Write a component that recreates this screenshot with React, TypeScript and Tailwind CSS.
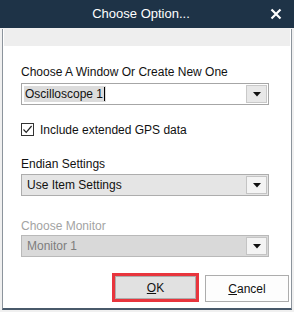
import React from "react";

function Caret() {
  return (
    <svg width="8" height="5" viewBox="0 0 8 5">
      <path d="M0 0 L8 0 L4 4.5 Z" fill="#111" />
    </svg>
  );
}

type ComboProps = {
  value: string;
  variant: "edit" | "list" | "disabled";
};

function Combo({ value, variant }: ComboProps) {
  const box =
    variant === "edit"
      ? "bg-white border-[#a6a6a6]"
      : variant === "list"
      ? "bg-[#e5e5e5] border-[#adadad]"
      : "bg-[#d9d9d9] border-[#b9b9b9]";
  const btn =
    variant === "edit"
      ? "bg-[#e8e8e8] border-[#c9c9c9]"
      : "bg-[#f4f4f4] border-[#c4c4c4]";
  return (
    <div className={`flex items-center w-[248px] h-[22px] border ${box}`}>
      <div className="flex-1 flex items-center pl-[2px]">
        {variant === "edit" ? (
          <span className="flex items-center h-[16px] bg-[#dcdcdc] pl-[1px] pr-[1px] text-[#111]">
            {value}
            <span className="inline-block w-px h-[14px] bg-black ml-[1px]" />
          </span>
        ) : (
          <span
            className={`pl-[3px] ${
              variant === "disabled" ? "text-[#7d7d7d]" : "text-[#111]"
            }`}
          >
            {value}
          </span>
        )}
      </div>
      <div
        className={`flex items-center justify-center w-[21px] h-[18px] mr-[1px] border ${btn}`}
      >
        <Caret />
      </div>
    </div>
  );
}

export default function App() {
  return (
    <div
      className="w-[294px] h-[312px] bg-[#f0f0f0] text-[12px] leading-[16px]"
      style={{ fontFamily: '"Liberation Sans", Arial, sans-serif' }}
    >
      <div className="flex items-center h-[28px] bg-[#1e3347] text-white">
        <div className="flex-1 text-center text-[13px] pl-[12px]">
          Choose Option...
        </div>
        <svg width="12" height="12" viewBox="0 0 12 12" className="mr-[12px]">
          <path
            d="M1.5 1.5 L10.5 10.5 M10.5 1.5 L1.5 10.5"
            stroke="#fff"
            strokeWidth="2.2"
          />
        </svg>
      </div>

      <div className="mx-[2px] h-[281px] bg-white border-l border-r border-[#8c949c] border-b-2 border-b-[#48596a]">
        <div className="mx-[1px] mt-[1px] h-[17px] bg-[#eeeeee]" />

        <div className="flex flex-col pl-[18px]">
          <div className="mt-[18px] h-[16px] text-[#111]">
            Choose A Window Or Create New One
          </div>
          <div className="mt-[3px]">
            <Combo value="Oscilloscope 1" variant="edit" />
          </div>

          <div className="flex items-center mt-[17px] h-[15px]">
            <div className="flex items-center justify-center w-[13px] h-[13px] border border-[#333] bg-white">
              <svg width="11" height="11" viewBox="0 0 11 11">
                <path
                  d="M1.5 5.5 L4.2 8.3 L9.6 2"
                  stroke="#222"
                  strokeWidth="1.2"
                  fill="none"
                />
              </svg>
            </div>
            <span className="ml-[6px] text-[#111]">Include extended GPS data</span>
          </div>

          <div className="mt-[19px] h-[16px] text-[#111]">Endian Settings</div>
          <div className="mt-[2px]">
            <Combo value="Use Item Settings" variant="list" />
          </div>

          <div className="mt-[22px] h-[16px] text-[#a3a3a3]">Choose Monitor</div>
          <div className="mt-[1px]">
            <Combo value="Monitor 1" variant="disabled" />
          </div>
        </div>

        <div className="flex justify-end items-end gap-[6px] mt-[16px] mr-[2px]">
          <div className="border-[3px] border-[#e8353d] w-[87px] h-[29px]">
            <div className="flex items-center justify-center h-full bg-[#e1e1e1] border border-[#adadad] text-[#111]">
              <span>
                <span className="underline">O</span>K
              </span>
            </div>
          </div>
          <div className="flex items-center justify-center w-[84px] h-[27px] bg-[#fdfdfd] border border-[#adadad] text-[#111]">
            <span>
              <span className="underline">C</span>ancel
            </span>
          </div>
        </div>
      </div>
    </div>
  );
}
